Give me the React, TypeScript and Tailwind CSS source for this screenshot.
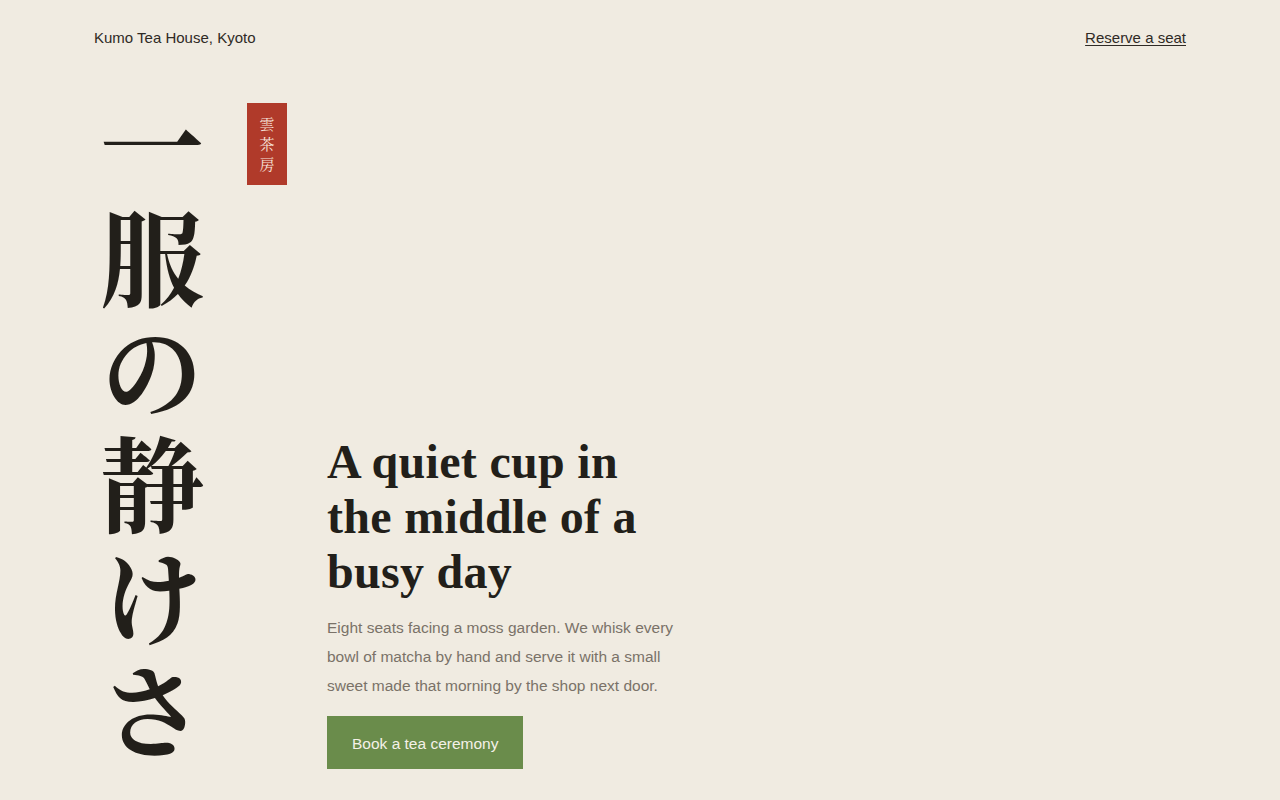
import React from "react";

export default function App() {
  return (
    <div className="h-[800px] w-full bg-[#f0ebe1] flex flex-col px-[94px] overflow-hidden">
      <header className="shrink-0 h-[76px] mb-[1px] flex items-center justify-between text-[15px] text-[#2f2a25] font-['Liberation_Sans',sans-serif]">
        <span>Kumo Tea House, Kyoto</span>
        <a href="#" className="underline underline-offset-2">Reserve a seat</a>
      </header>
      <main className="flex-1 min-h-0 flex items-start">
        <h1 className="[writing-mode:vertical-rl] text-[104px] leading-[104px] tracking-[9px] font-bold text-[#221f1a] font-['Noto_Serif_CJK_JP','Noto_Sans_CJK_JP',serif] ml-[6px] mt-[17px]">
          一服の静けさ
        </h1>
        <div className="ml-[43px] mt-[26px] w-[40px] h-[82px] bg-[#b03a2a] flex flex-col items-center justify-center text-[15px] leading-[20px] text-[#f6e3da] font-['Noto_Serif_CJK_JP','Noto_Sans_CJK_JP',serif]">
          <span>雲</span>
          <span>茶</span>
          <span>房</span>
        </div>
        <div className="ml-[40px] self-end mb-[31px] w-[360px] flex flex-col items-start">
          <h2 className="w-[345px] text-[48px] leading-[55px] tracking-[0.3px] font-bold text-[#221f1a] font-['Liberation_Serif',serif]">
            A quiet cup in the middle of a busy day
          </h2>
          <p className="mt-[14px] w-[355px] text-[15.5px] leading-[29px] text-[#7a7268] font-['Liberation_Sans',sans-serif]">
            Eight seats facing a moss garden. We whisk every bowl of matcha by hand and serve it with a small sweet made that morning by the shop next door.
          </p>
          <button className="mt-[16px] h-[53px] pt-[2px] px-[25px] bg-[#6a8c4b] text-[#f4f1e8] text-[15.5px] font-['Liberation_Sans',sans-serif]">
            Book a tea ceremony
          </button>
        </div>
      </main>
    </div>
  );
}
